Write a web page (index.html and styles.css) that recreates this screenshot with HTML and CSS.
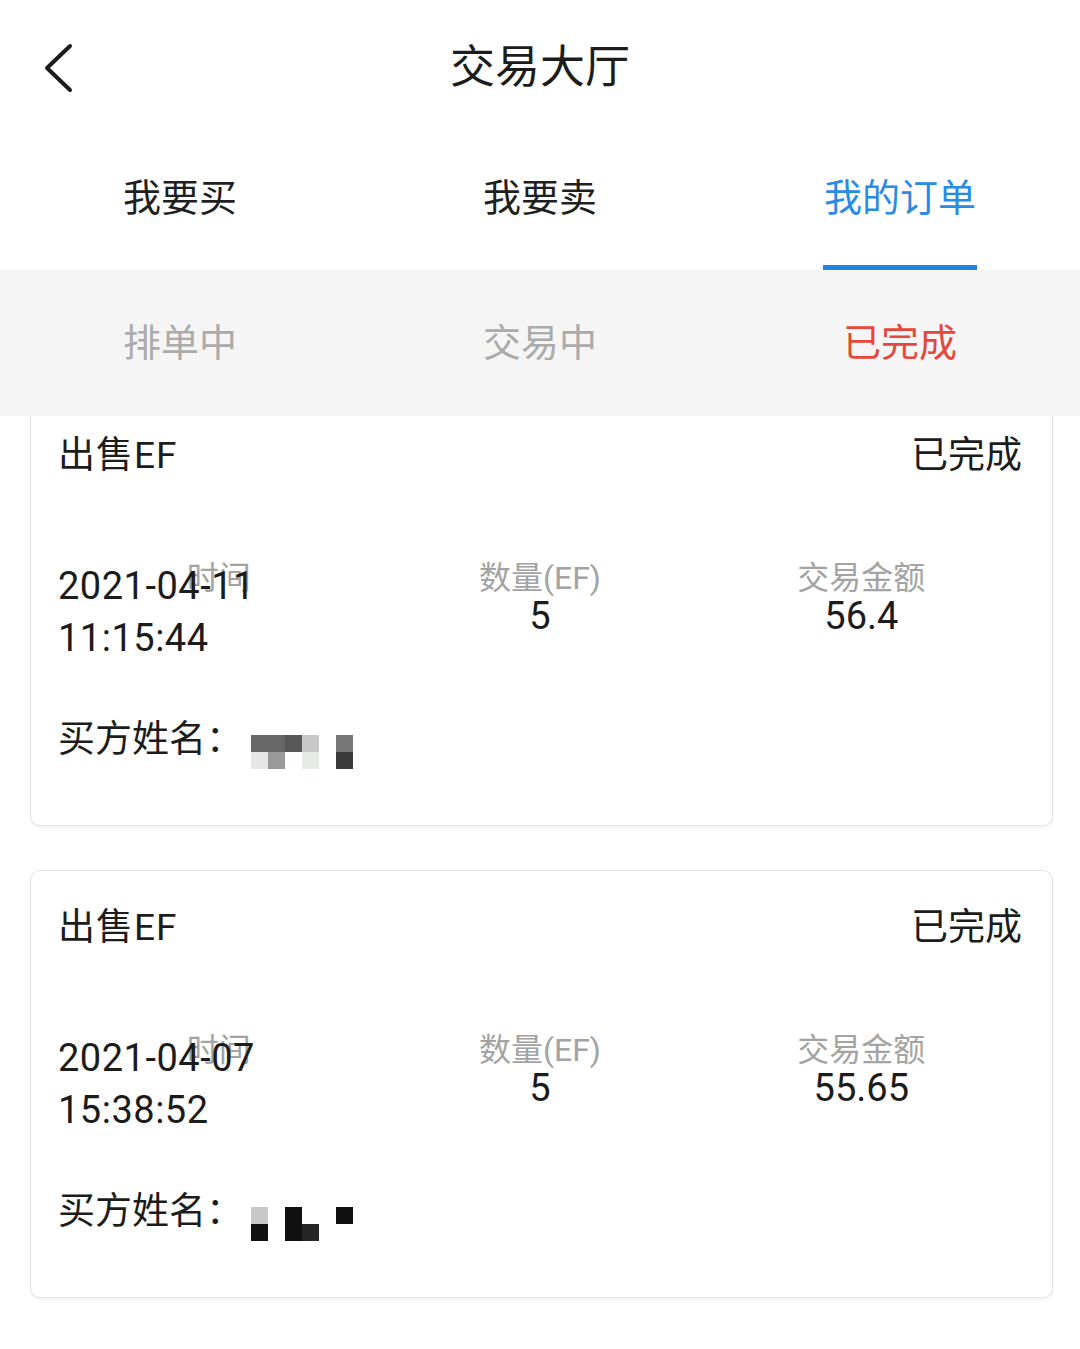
FILE: index.html
```html
<!DOCTYPE html>
<html lang="zh-CN">
<head>
<meta charset="utf-8">
<title>交易大厅</title>
<link rel="stylesheet" href="styles.css">
</head>
<body>
<div class="page">
  <header class="header">
    <span class="back">
      <svg width="40" height="52" viewBox="0 0 40 52"><path d="M30 4 L7 26 L30 48" fill="none" stroke="#1c1c1c" stroke-width="4" stroke-linecap="round" stroke-linejoin="round"/></svg>
    </span>
    <h1 class="title">交易大厅</h1>
  </header>

  <nav class="tabs">
    <div class="tab">我要买</div>
    <div class="tab">我要卖</div>
    <div class="tab active">我的订单</div>
  </nav>

  <nav class="subtabs">
    <div class="subtab">排单中</div>
    <div class="subtab">交易中</div>
    <div class="subtab done">已完成</div>
  </nav>

  <main class="list">
    <section class="card">
      <div class="card-head">
        <span>出售EF</span>
        <span>已完成</span>
      </div>
      <div class="stats">
        <div class="stat time">
          <div class="label">时间</div>
          <div class="date">2021-04-11<br>11:15:44</div>
        </div>
        <div class="stat">
          <div class="label">数量(EF)</div>
          <div class="value">5</div>
        </div>
        <div class="stat">
          <div class="label">交易金额</div>
          <div class="value">56.4</div>
        </div>
      </div>
      <div class="buyer"><span>买方姓名：</span><span class="mosaic">
        <i class="c66"></i><i class="c66"></i><i class="c55"></i><i class="ccc"></i><i></i><i class="c77"></i>
        <i class="ce5"></i><i class="c99"></i><i></i><i class="ce6"></i><i></i><i class="c33"></i>
      </span></div>
    </section>

    <section class="card">
      <div class="card-head">
        <span>出售EF</span>
        <span>已完成</span>
      </div>
      <div class="stats">
        <div class="stat time">
          <div class="label">时间</div>
          <div class="date">2021-04-07<br>15:38:52</div>
        </div>
        <div class="stat">
          <div class="label">数量(EF)</div>
          <div class="value">5</div>
        </div>
        <div class="stat">
          <div class="label">交易金额</div>
          <div class="value">55.65</div>
        </div>
      </div>
      <div class="buyer"><span>买方姓名：</span><span class="mosaic">
        <i class="ccc"></i><i></i><i class="c11"></i><i></i><i></i><i class="c11"></i>
        <i class="c11"></i><i></i><i class="c11"></i><i class="c22"></i><i></i><i></i>
      </span></div>
    </section>
  </main>
</div>
</body>
</html>
```

FILE: styles.css
```css
* { box-sizing: border-box; margin: 0; padding: 0; }

body {
  background: #ffffff;
  font-family: Roboto, "Noto Sans CJK SC", "Noto Sans", sans-serif;
  color: #1c1c1c;
}

.page { width: 1080px; }

.header {
  height: 136px;
  display: flex;
  align-items: center;
  justify-content: center;
  position: relative;
}

.back {
  position: absolute;
  left: 40px;
  top: 42px;
  width: 40px;
  height: 52px;
}

.title {
  font-size: 45px;
  font-weight: 400;
  line-height: 56px;
  color: #1c1c1c;
}

.tabs {
  display: grid;
  grid-template-columns: repeat(3, 1fr);
  height: 134px;
}

.tab {
  display: flex;
  justify-content: center;
  padding-top: 37px;
  font-size: 38px;
  line-height: 50px;
  color: #1f1f1f;
  position: relative;
}

.tab.active {
  color: #2a8be3;
}

.tab.active::after {
  content: "";
  position: absolute;
  bottom: 0;
  left: 50%;
  width: 154px;
  margin-left: -77px;
  height: 5px;
  background: #1f84e2;
}

.subtabs {
  display: grid;
  grid-template-columns: repeat(3, 1fr);
  height: 146px;
  background: #f5f5f5;
  position: relative;
  z-index: 1;
}

.subtab {
  display: flex;
  align-items: center;
  justify-content: center;
  font-size: 38px;
  line-height: 50px;
  color: #ababab;
}

.subtab.done { color: #e4483c; }

.list {
  margin-top: -18px;
  display: flex;
  flex-direction: column;
  gap: 44px;
  padding: 0 27px 40px 30px;
}

.card {
  border: 1px solid #e3e3e3;
  border-radius: 10px;
  box-shadow: 0 2px 3px rgba(0, 0, 0, 0.06);
  padding: 32px 30px 60px 27px;
  background: #fff;
}

.card-head {
  display: flex;
  justify-content: space-between;
  font-size: 37px;
  line-height: 50px;
  color: #1c1c1c;
}

.card-head span:first-child { letter-spacing: 1px; }

.stats {
  margin-top: 77px;
  display: grid;
  grid-template-columns: repeat(3, 1fr);
}

.stat {
  display: flex;
  flex-direction: column;
  align-items: center;
}

.stat.time {
  display: grid;
  align-items: start;
}

.stat.time > * { grid-area: 1 / 1; }

.label {
  font-size: 32px;
  line-height: 40px;
  color: #a3a3a3;
  text-align: center;
}

.value {
  font-size: 38px;
  line-height: 36px;
  color: #1c1c1c;
}

.date {
  padding-top: 2px;
  font-size: 38px;
  line-height: 52px;
  color: #1c1c1c;
  text-align: left;
  justify-self: start;
  letter-spacing: 0.5px;
}

.buyer {
  margin-top: 51px;
  height: 50px;
  display: flex;
  align-items: flex-start;
  font-size: 37px;
  line-height: 50px;
  color: #1c1c1c;
}

.mosaic {
  display: grid;
  grid-template-columns: repeat(6, 17px);
  grid-template-rows: repeat(2, 17px);
  margin-top: 20px;
  margin-left: 8px;
}

.mosaic i { display: block; }
.c11 { background: #111; }
.c22 { background: #262626; }
.c33 { background: #3a3a3a; }
.c55 { background: #585858; }
.c66 { background: #676767; }
.c77 { background: #777; }
.c99 { background: #9a9a9a; }
.ccc { background: #c8c8c8; }
.ce5 { background: #e6e6e6; }
.ce6 { background: #e4ebe4; }
```
